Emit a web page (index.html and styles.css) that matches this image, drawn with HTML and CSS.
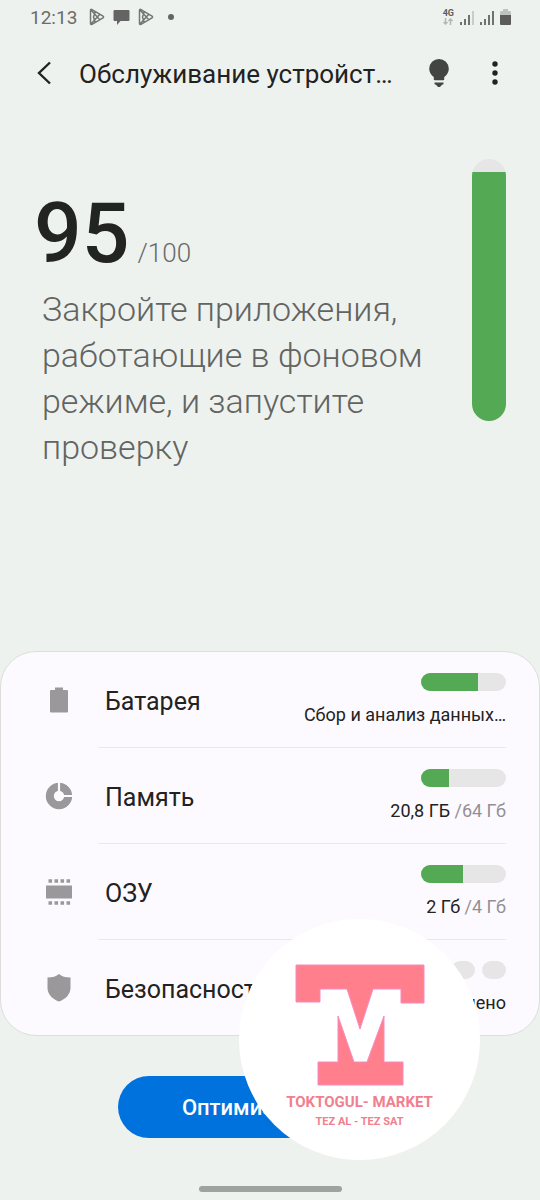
FILE: index.html
```
<!DOCTYPE html>
<html lang="ru">
<head>
    <meta charset="UTF-8">
    <meta name="viewport" content="width=device-width, initial-scale=1.0">
    <title>Обслуживание устройства</title>
    <link rel="stylesheet" href="styles.css">
</head>
<body>
    <div class="status-bar">
        <span class="clock">12:13</span>
        <svg class="status-icon" width="16" height="18" viewBox="0 0 16 18"><path d="M1.500 2.500 Q1.500 .8 3 1.600 L14 8 Q15.200 9 14 10 L3 16.300 Q1.500 17 1.500 15.500 Z M2 2 L11 12 M2 16 L11 6 M6 4 L4.500 9 L6 14"/></svg>
        <svg width="17" height="17" viewBox="0 0 17 17"><path fill="#646464" d="M1.500 1h14q1 0 1 1v9q0 1-1 1H7.500L4 16v-4H1.500q-1 0-1-1V2q0-1 1-1z"/></svg>
        <svg class="status-icon" width="16" height="18" viewBox="0 0 16 18"><path d="M1.500 2.500 Q1.500 .8 3 1.600 L14 8 Q15.200 9 14 10 L3 16.300 Q1.500 17 1.500 15.500 Z M2 2 L11 12 M2 16 L11 6 M6 4 L4.500 9 L6 14"/></svg>
        <span class="status-dot"></span>
        <div class="status-right">
            <div class="network">
                <span>4G</span>
                <svg width="10" height="7" viewBox="0 0 10 7"><path fill="none" stroke="#b5b7b5" stroke-width="1.500" d="M2.500 0v6M.5 4l2 2 2-2M7.500 7V1M5.500 3l2-2 2 2"/></svg>
            </div>
            <svg width="14" height="15" viewBox="0 0 14 15"><path fill="#707270" d="M0 12h2v3H0zM4 9h2v6H4zM8 5h2v10H8z"/><path fill="#c9ccc9" d="M12 1h2v14h-2z"/></svg>
            <svg width="14" height="15" viewBox="0 0 14 15"><path fill="#707270" d="M0 12h2v3H0zM4 9h2v6H4zM8 5h2v10H8zM12 1h2v14h-2z"/></svg>
            <svg width="11" height="16" viewBox="0 0 11 16"><path fill="#bfc2bf" d="M3 0h5v2h2q1 0 1 1v4H0V3q0-1 1-1h2z"/><path fill="#5c5c5c" d="M0 6h11v9q0 1-1 1H1q-1 0-1-1z"/></svg>
        </div>
    </div>

    <header class="app-bar">
        <button class="icon-button" aria-label="Назад">
            <svg width="16" height="24" viewBox="0 0 16 24"><path fill="none" stroke="#222" stroke-width="2.400" d="M14 1.500L3 12l11 10.500"/></svg>
        </button>
        <h1>Обслуживание устройст…</h1>
        <button class="icon-button" aria-label="Советы">
            <svg width="20" height="28" viewBox="0 0 20 28"><path fill="#424542" d="M10 0a9.800 9.800 0 0 1 9.800 9.800c0 3.700-2 6.500-4.600 8.200V20.500q0 .8-1 .8H5.800q-1 0-1-.8V18C2.200 16.300.2 13.500.2 9.800A9.800 9.800 0 0 1 10 0zM5.500 23.500h9v1.200q0 1-1.500 1L11 28H9l-2-2.300q-1.500 0-1.500-1z"/></svg>
        </button>
        <button class="icon-button" aria-label="Ещё">
            <svg width="6" height="24" viewBox="0 0 6 24"><g fill="#222"><circle cx="3" cy="3" r="2.700"/><circle cx="3" cy="12" r="2.700"/><circle cx="3" cy="21" r="2.700"/></g></svg>
        </button>
    </header>

    <main>
        <section class="summary">
            <div class="summary-text">
                <p class="score"><strong>95</strong><span>/100</span></p>
                <p class="advice">Закройте приложения, работающие в фоновом режиме, и запустите проверку</p>
            </div>
            <div class="score-bar"><div class="score-fill" style="height: 95%"></div></div>
        </section>

        <ul class="card">
            <li class="row">
                <svg class="row-icon" width="28" height="28" viewBox="0 0 28 28"><path fill="#9a989b" d="M10 1.500h8V4h4q1 0 1 1v20.500q0 1-1 1H6q-1 0-1-1V5q0-1 1-1h4z"/></svg>
                <div class="row-body">
                    <span class="label">Батарея</span>
                    <div class="info">
                        <div class="meter"><div class="meter-fill" style="width: 67%"></div></div>
                        <span class="value">Сбор и анализ данных…</span>
                    </div>
                </div>
            </li>
            <li class="row">
                <svg class="row-icon" width="28" height="28" viewBox="0 0 28 28"><circle cx="14" cy="14" r="9.200" fill="none" stroke="#9a989b" stroke-width="8"/><path stroke="#fdfaff" stroke-width="2.200" d="M14 0v10M18 14h10"/></svg>
                <div class="row-body">
                    <span class="label">Память</span>
                    <div class="info">
                        <div class="meter"><div class="meter-fill" style="width: 33%"></div></div>
                        <span class="value">20,8 ГБ <span class="total">/64 Гб</span></span>
                    </div>
                </div>
            </li>
            <li class="row">
                <svg class="row-icon" width="28" height="28" viewBox="0 0 28 28"><path fill="#9a989b" d="M1 7.500h26v13H1z"/><path stroke="#9a989b" stroke-width="3.600" stroke-dasharray="3.600 2.400" d="M3.500 3h21.600M3.500 25h21.600"/></svg>
                <div class="row-body">
                    <span class="label">ОЗУ</span>
                    <div class="info">
                        <div class="meter"><div class="meter-fill" style="width: 49%"></div></div>
                        <span class="value">2 Гб <span class="total">/4 Гб</span></span>
                    </div>
                </div>
            </li>
            <li class="row">
                <svg class="row-icon" width="28" height="28" viewBox="0 0 28 28"><path fill="#9a989b" d="M14 0q4 3.500 11.500 3.500V14c0 7-6 11.500-11.500 13.500C8.500 25.500 2.500 21 2.500 14V3.500Q10 3.500 14 0z"/></svg>
                <div class="row-body">
                    <span class="label">Безопасность</span>
                    <div class="info">
                        <div class="pills"><i></i><i></i><i></i></div>
                        <span class="value">Отключено</span>
                    </div>
                </div>
            </li>
        </ul>

        <div class="actions">
            <button class="optimize">Оптимизировать</button>
        </div>
    </main>

    <div class="home-bar"></div>

    <div class="badge">
        <svg width="130" height="122" viewBox="0 0 130 122"><path fill="#ff808c" stroke="#f78ac4" stroke-width="1" stroke-linejoin="round" d="M1 1h128v38h-23V25H78L65 65 52 25H25v13H1zM43 52L59 98h13L89 52v46h19v23H23V98h20z"/></svg>
        <span class="badge-name">TOKTOGUL- MARKET</span>
        <span class="badge-slogan">TEZ AL - TEZ SAT</span>
    </div>
</body>
</html>
```

FILE: styles.css
```
* {
    box-sizing: border-box;
}
body {
    margin: 0;
    min-height: 100vh;
    display: flex;
    flex-direction: column;
    position: relative;
    background-color: #eef2ef;
    color: #222222;
    font-family: Roboto, "Noto Sans", sans-serif;
}
h1, p, ul {
    margin: 0;
    padding: 0;
}
button {
    font-family: inherit;
    border: none;
    cursor: pointer;
}
svg {
    display: block;
    flex: none;
}
.status-bar {
    height: 34px;
    padding: 0 29px 0 30px;
    display: flex;
    align-items: center;
    gap: 8px;
}
.clock {
    margin-right: 4px;
    font-size: 19px;
    color: #6b6d6b;
}
.status-icon path {
    fill: none;
    stroke: #747674;
    stroke-width: 1.5;
}
.status-dot {
    width: 6px;
    height: 6px;
    margin-left: 6px;
    border-radius: 50%;
    background-color: #646464;
}
.status-right {
    margin-left: auto;
    display: flex;
    align-items: center;
    gap: 6px;
}
.network {
    display: flex;
    flex-direction: column;
    align-items: center;
    font-size: 9px;
    line-height: 9px;
    font-weight: 700;
    color: #5c5c5c;
}
.app-bar {
    height: 78px;
    padding: 0 32px 0 24px;
    display: flex;
    align-items: center;
}
.app-bar h1 {
    flex: 1;
    margin-left: 15px;
    padding-top: 2px;
    font-size: 26px;
    font-weight: 400;
    white-space: nowrap;
}
.icon-button {
    width: 40px;
    height: 40px;
    padding: 0;
    display: flex;
    align-items: center;
    justify-content: center;
    background: none;
}
.icon-button:last-child {
    width: 26px;
    margin-left: 23px;
}
main {
    flex: 1;
    display: flex;
    flex-direction: column;
}
.summary {
    flex: 1;
    padding: 47px 34px 0 42px;
    display: flex;
    justify-content: space-between;
}
.summary-text {
    max-width: 390px;
    padding-top: 33px;
}
.score {
    margin-left: -8px;
    display: flex;
    align-items: baseline;
    color: #222422;
}
.score strong {
    font-size: 84px;
    line-height: 84px;
    font-weight: 500;
}
.score span {
    margin-left: 8px;
    font-size: 26px;
    line-height: 26px;
    font-weight: 300;
    color: #686a68;
}
.advice {
    margin-top: 10px;
    font-size: 34px;
    line-height: 46px;
    font-weight: 300;
    color: #626462;
}
.score-bar {
    width: 34px;
    height: 262px;
    display: flex;
    align-items: flex-end;
    flex: none;
    border-radius: 17px;
    overflow: hidden;
    background-color: #e6e6e6;
}
.score-fill {
    width: 100%;
    background-color: #54aa54;
}
.card {
    list-style: none;
    border: 1px solid #dcdedc;
    border-radius: 36px;
    background-color: #fdfaff;
}
.row {
    height: 96px;
    padding: 0 33px 0 44px;
    display: flex;
    align-items: center;
}
.row:last-child {
    height: 95px;
}
.row-body {
    flex: 1;
    height: 100%;
    margin-left: 25px;
    padding-left: 7px;
    display: flex;
    align-items: center;
    justify-content: space-between;
    border-bottom: 1px solid #ebe8ec;
}
.row:last-child .row-body {
    border-bottom: none;
}
.label {
    padding-top: 4px;
    font-size: 25px;
}
.info {
    display: flex;
    flex-direction: column;
    align-items: flex-end;
    gap: 12px;
}
.meter {
    width: 85px;
    height: 18px;
    border-radius: 9px;
    overflow: hidden;
    background-color: #e6e6e6;
}
.meter-fill {
    height: 100%;
    background-color: #54aa54;
}
.value {
    font-size: 18px;
    line-height: 24px;
    white-space: nowrap;
}
.total {
    color: #929094;
}
.pills {
    display: flex;
    gap: 7px;
}
.pills i {
    width: 24px;
    height: 18px;
    border-radius: 9px;
    background-color: #e6e6e6;
}
.actions {
    padding: 40px 0 48px;
    display: flex;
    justify-content: center;
}
.optimize {
    width: 304px;
    height: 62px;
    border-radius: 31px;
    background-color: #0072de;
    color: #ffffff;
    font-size: 22px;
    font-weight: 500;
}
.home-bar {
    width: 143px;
    height: 6px;
    margin: 0 auto 8px;
    border-radius: 3px;
    background-color: #a0a2a0;
}
/* shop badge over the card and the button */
.badge {
    position: absolute;
    left: calc(50% - 31px);
    bottom: 40px;
    width: 241px;
    height: 241px;
    padding-top: 45px;
    display: flex;
    flex-direction: column;
    align-items: center;
    border-radius: 50%;
    background-color: #ffffff;
    color: #f0808e;
    font-weight: 700;
    white-space: nowrap;
}
.badge-name {
    margin-top: 5px;
    font-size: 15px;
    line-height: 22px;
}
.badge-slogan {
    font-size: 11px;
    line-height: 18px;
}
```
